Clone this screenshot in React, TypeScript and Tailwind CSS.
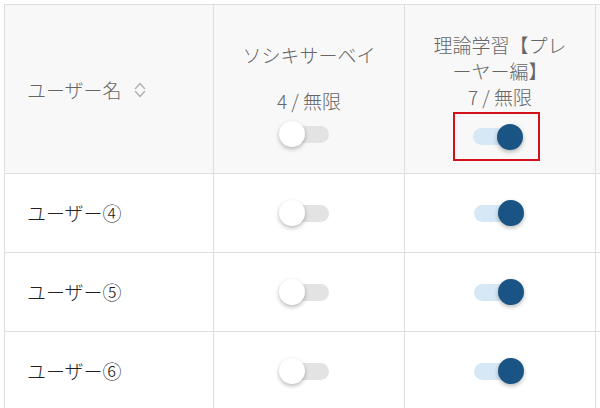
import React from 'react';

const font = { fontFamily: '"Noto Sans CJK JP", "Noto Sans", sans-serif' };

const Toggle = ({ on }: { on: boolean }) => (
  <div className="relative w-[46px] h-[17px] flex-shrink-0">
    <div className={`absolute inset-0 rounded-full ${on ? 'bg-[#d6e8f5]' : 'bg-[#e3e3e3]'}`} />
    <div
      className={`absolute top-1/2 -translate-y-1/2 w-[26px] h-[26px] rounded-full shadow-[0_2px_4px_rgba(0,0,0,0.28)] ${
        on ? 'left-[24px] bg-[#1a5484]' : 'left-[-4px] bg-white'
      }`}
    />
  </div>
);

const SortIcon = () => (
  <svg width="14" height="18" viewBox="0 0 14 18" fill="none" stroke="#b5b5b5" strokeWidth="1.6" strokeLinecap="round" strokeLinejoin="round">
    <path d="M2.5 7.5 L7 2.5 L11.5 7.5" />
    <path d="M2.5 10.5 L7 15.5 L11.5 10.5" />
  </svg>
);

const users = ['ユーザー④', 'ユーザー⑤', 'ユーザー⑥'];

export default function App() {
  return (
    <div className="w-[600px] h-[408px] overflow-hidden bg-white pl-[4px] pt-[4px] font-light" style={font}>
      <div className="grid grid-cols-[209px_191px_191px_191px] border-l border-t border-[#dedede] w-max">
        {/* header */}
        <div className="h-[169px] bg-[#f8f8f8] border-r border-b border-[#dedede] flex items-center pl-[22px] pt-[2px] gap-[11px] text-[19px] text-[#666]">
          <span className="leading-[26px]">ユーザー名</span>
          <SortIcon />
        </div>
        <div className="h-[169px] bg-[#f8f8f8] border-r border-b border-[#dedede] flex flex-col items-center pt-[37px] text-[19px] text-[#666]">
          <div className="leading-[26px]">ソシキサーベイ</div>
          <div className="leading-[26px] mt-[20px]">4 / 無限</div>
          <div className="h-[26px] mt-[7px] -ml-[6px] flex items-center">
            <Toggle on={false} />
          </div>
        </div>
        <div className="h-[169px] bg-[#f8f8f8] border-r border-b border-[#dedede] flex flex-col items-center pt-[27px] text-[19px] text-[#666]">
          <div className="leading-[26px] text-center">
            理論学習【プレ
            <br />
            ーヤー編】
          </div>
          <div className="leading-[26px]">7 / 無限</div>
          <div className="w-[87px] h-[49px] mt-[2px] -ml-[8px] border-2 border-[#d2111c] flex items-center justify-center">
            <Toggle on={true} />
          </div>
        </div>
        <div className="h-[169px] bg-[#f8f8f8] border-b border-[#dedede]" />

        {/* rows */}
        {users.map((name) => (
          <React.Fragment key={name}>
            <div className="h-[79px] border-r border-b border-[#dedede] flex items-center pl-[22px] text-[19px] text-[#222]">
              <span className="leading-[26px]">{name}</span>
            </div>
            <div className="h-[79px] border-r border-b border-[#dedede] flex items-center justify-center">
              <div className="-ml-[6px]">
                <Toggle on={false} />
              </div>
            </div>
            <div className="h-[79px] border-r border-b border-[#dedede] flex items-center justify-center">
              <div className="-ml-[6px]">
                <Toggle on={true} />
              </div>
            </div>
            <div className="h-[79px] border-b border-[#dedede]" />
          </React.Fragment>
        ))}
      </div>
    </div>
  );
}
